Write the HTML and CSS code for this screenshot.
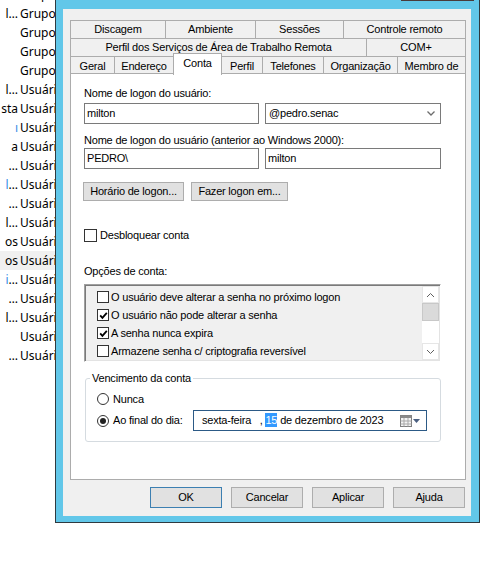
FILE: index.html
```html
<!DOCTYPE html>
<html lang="pt-BR">
<head>
<meta charset="utf-8">
<title>Propriedades</title>
<link rel="stylesheet" href="styles.css">
</head>
<body>
<div class="screen">
  <div class="bg-list">
    <div class="row"><span class="c1"></span><span class="c2">Grupo</span></div>
    <div class="row"><span class="c1">l…</span><span class="c2">Grupo</span></div>
    <div class="row"><span class="c1"></span><span class="c2">Grupo</span></div>
    <div class="row"><span class="c1"></span><span class="c2">Grupo</span></div>
    <div class="row"><span class="c1"></span><span class="c2">Grupo</span></div>
    <div class="row"><span class="c1">l…</span><span class="c2">Usuário</span></div>
    <div class="row"><span class="c1">sta</span><span class="c2">Usuário</span></div>
    <div class="row"><span class="c1 blue">ı</span><span class="c2">Usuário</span></div>
    <div class="row"><span class="c1">a</span><span class="c2">Usuário</span></div>
    <div class="row"><span class="c1">…</span><span class="c2">Usuário</span></div>
    <div class="row"><span class="c1"><span class="blue">l</span>…</span><span class="c2">Usuário</span></div>
    <div class="row"><span class="c1">…</span><span class="c2">Usuário</span></div>
    <div class="row"><span class="c1">l…</span><span class="c2">Usuário</span></div>
    <div class="row"><span class="c1">os</span><span class="c2">Usuário</span></div>
    <div class="row hl"><span class="c1">os</span><span class="c2">Usuário</span></div>
    <div class="row"><span class="c1"><span class="blue">i</span>…</span><span class="c2">Usuário</span></div>
    <div class="row"><span class="c1">…</span><span class="c2">Usuário</span></div>
    <div class="row"><span class="c1">l…</span><span class="c2">Usuário</span></div>
    <div class="row"><span class="c1"></span><span class="c2">Usuário</span></div>
    <div class="row"><span class="c1">…</span><span class="c2">Usuário</span></div>
  </div>

  <div class="window">
    <div class="titlebar"><span class="close-edge"></span></div>
    <div class="dialog">
      <div class="tabs">
        <div class="tabrow r1">
          <div class="tab">Discagem</div>
          <div class="tab">Ambiente</div>
          <div class="tab">Sessões</div>
          <div class="tab">Controle remoto</div>
        </div>
        <div class="tabrow r2">
          <div class="tab">Perfil dos Serviços de Área de Trabalho Remota</div>
          <div class="tab">COM+</div>
        </div>
        <div class="tabrow r3">
          <div class="tab">Geral</div>
          <div class="tab">Endereço</div>
          <div class="tab sel">Conta</div>
          <div class="tab">Perfil</div>
          <div class="tab">Telefones</div>
          <div class="tab">Organização</div>
          <div class="tab">Membro de</div>
        </div>
      </div>

      <div class="panel">
        <div class="label first">Nome de logon do usuário:</div>
        <div class="field-row r-a">
          <div class="input">milton</div>
          <div class="input select"><span>@pedro.senac</span>
            <svg class="chev" width="8" height="5" viewBox="0 0 8 5"><polyline points="0.5,0.5 4,4 7.5,0.5" fill="none" stroke="#6d6d6d" stroke-width="1.3"/></svg>
          </div>
        </div>
        <div class="label second">Nome de logon do usuário (anterior ao Windows 2000):</div>
        <div class="field-row r-b">
          <div class="input">PEDRO\</div>
          <div class="input">milton</div>
        </div>
        <div class="btn-row">
          <div class="btn b-horario">Horário de logon...</div>
          <div class="btn b-fazer">Fazer logon em...</div>
        </div>
        <div class="check-row">
          <span class="cbox"></span><span class="cb-label">Desbloquear conta</span>
        </div>
        <div class="label opts">Opções de conta:</div>
        <div class="listbox">
          <div class="items">
            <div class="item"><span class="cbox small"></span>O usuário deve alterar a senha no próximo logon</div>
            <div class="item"><span class="cbox small checked"><svg width="9" height="9" viewBox="0 0 9 9"><polyline points="1.2,4.4 3.4,6.8 7.8,1.8" fill="none" stroke="#000" stroke-width="1.8"/></svg></span>O usuário não pode alterar a senha</div>
            <div class="item"><span class="cbox small checked"><svg width="9" height="9" viewBox="0 0 9 9"><polyline points="1.2,4.4 3.4,6.8 7.8,1.8" fill="none" stroke="#000" stroke-width="1.8"/></svg></span>A senha nunca expira</div>
            <div class="item"><span class="cbox small"></span>Armazene senha c/ criptografia reversível</div>
          </div>
          <div class="scrollbar">
            <div class="sb-btn"><svg width="9" height="6" viewBox="0 0 9 6"><polyline points="1,5 4.5,1.5 8,5" fill="none" stroke="#606060" stroke-width="1"/></svg></div>
            <div class="sb-thumb"></div>
            <div class="sb-track"></div>
            <div class="sb-btn"><svg width="9" height="6" viewBox="0 0 9 6"><polyline points="1,1 4.5,4.5 8,1" fill="none" stroke="#606060" stroke-width="1"/></svg></div>
          </div>
        </div>
        <fieldset class="group">
          <legend>Vencimento da conta</legend>
          <div class="radio-row">
            <span class="radio"></span><span class="r-label">Nunca</span>
          </div>
          <div class="radio-row second-radio">
            <div class="radio-opt"><span class="radio on"></span><span class="r-label">Ao final do dia:</span></div>
            <div class="datepicker">
              <span class="date-text">sexta-feira &nbsp;&nbsp;, <span class="sel-day">15</span> de dezembro de 2023</span>
              <svg class="cal" width="12" height="12" viewBox="0 0 12 12">
                <rect x="0.5" y="0.5" width="11" height="11" fill="#f4f4f4" stroke="#7f7f7f"/>
                <rect x="0.5" y="0.5" width="11" height="2.5" fill="#8a8a8a"/>
                <line x1="4" y1="3" x2="4" y2="11.5" stroke="#a9a9a9"/>
                <line x1="8" y1="3" x2="8" y2="11.5" stroke="#a9a9a9"/>
                <line x1="0.5" y1="6" x2="11.5" y2="6" stroke="#a9a9a9"/>
                <line x1="0.5" y1="9" x2="11.5" y2="9" stroke="#a9a9a9"/>
              </svg>
              <svg class="dd" width="7" height="4" viewBox="0 0 7 4"><polygon points="0,0 7,0 3.5,4" fill="#4a5f80"/></svg>
            </div>
          </div>
        </fieldset>
      </div>

      <div class="footer">
        <div class="btn fbtn default">OK</div>
        <div class="btn fbtn">Cancelar</div>
        <div class="btn fbtn">Aplicar</div>
        <div class="btn fbtn">Ajuda</div>
      </div>
    </div>
  </div>
</div>
</body>
</html>
```

FILE: styles.css
```css
* { box-sizing: border-box; }

html, body {
  margin: 0;
  padding: 0;
}

body {
  width: 496px;
  height: 569px;
  overflow: hidden;
  background: #ffffff;
  color: #000000;
  font-family: "Liberation Sans", Arial, sans-serif;
  font-size: 11px;
}

.screen {
  display: flex;
  align-items: flex-start;
}

/* background list (explorer behind dialog) */
.bg-list {
  width: 55px;
  flex: 0 0 55px;
  overflow: hidden;
  margin-top: -15px;
  font-family: "Noto Sans", sans-serif;
  font-size: 12px;
  color: #000;
}

.row {
  display: flex;
  height: 19px;
  line-height: 19px;
  white-space: nowrap;
}

.row.hl {
  background: #f0f0f0;
}

.c1 {
  width: 19px;
  flex: 0 0 19px;
  display: flex;
  justify-content: flex-end;
  overflow: hidden;
  padding-right: 1px;
}

.c2 {
  margin-left: 1px;
}

.blue {
  color: #3a8ee6;
}

/* window frame */
.window {
  width: 425px;
  flex: 0 0 425px;
  background: #62c7e9;
  border: 1px solid #2f3a40;
  border-top: none;
  padding: 0 8px 6px 7px;
}

.titlebar {
  height: 9px;
  display: flex;
  justify-content: flex-end;
  align-items: flex-start;
}

.close-edge {
  width: 73px;
  height: 1px;
  background: #4a3b3b;
  margin-right: -3px;
}

.dialog {
  background: #f0f0f0;
  padding: 11px 5px 8px 7px;
  letter-spacing: -0.2px;
}

/* tabs */
.tabs {
  width: 396px;
}

.tabrow {
  display: flex;
  height: 19px;
  margin-bottom: -1px;
}

.tabrow.r3 {
  height: 18px;
  margin-bottom: 0;
}

.tab {
  height: 100%;
  border: 1px solid #acacac;
  margin-right: -1px;
  background: #f0f0f0;
  text-align: center;
  line-height: 17px;
  white-space: nowrap;
  overflow: hidden;
}

.r3 .tab {
  line-height: 18px;
}

.r1 .tab:nth-child(1) { width: 96px; }
.r1 .tab:nth-child(2) { width: 91px; }
.r1 .tab:nth-child(3) { width: 89px; }
.r1 .tab:nth-child(4) { width: 123px; }

.r2 .tab:nth-child(1) { width: 297px; }
.r2 .tab:nth-child(2) { width: 100px; }

.r3 .tab:nth-child(1) { width: 45px; }
.r3 .tab:nth-child(2) { width: 60px; }
.r3 .tab:nth-child(3) { width: 49px; }
.r3 .tab:nth-child(4) { width: 42px; }
.r3 .tab:nth-child(5) { width: 62px; }
.r3 .tab:nth-child(6) { width: 75px; }
.r3 .tab:nth-child(7) { width: 69px; }

.tab.sel {
  position: relative;
  z-index: 2;
  height: 22px;
  margin-top: -3px;
  background: #ffffff;
  border-bottom: none;
  line-height: 19px;
}

/* panel */
.panel {
  width: 396px;
  height: 407px;
  margin-top: -1px;
  background: #ffffff;
  border: 1px solid #acacac;
  padding: 13px 24px 0 13px;
}

.label {
  height: 13px;
  line-height: 13px;
  white-space: nowrap;
}

.label.second { margin-top: 10px; }
.label.opts { margin-top: 23px; }

.field-row {
  display: flex;
  gap: 6px;
}

.field-row.r-a { margin-top: 3px; }
.field-row.r-b { margin-top: 1px; }

.input {
  width: 175px;
  height: 21px;
  border: 1px solid #7a7a7a;
  background: #fff;
  line-height: 19px;
  padding-left: 2px;
  white-space: nowrap;
}

.input + .input {
  width: 176px;
}

.select {
  display: flex;
  justify-content: space-between;
  align-items: center;
  padding-right: 5px;
  padding-left: 3px;
}

.select span {
  line-height: 19px;
}

.chev {
  display: block;
}

.btn {
  height: 19px;
  background: #e1e1e1;
  border: 1px solid #adadad;
  text-align: center;
  line-height: 17px;
  white-space: nowrap;
}

.btn-row {
  display: flex;
  gap: 7px;
  margin-top: 13px;
  margin-left: -1px;
}

.b-horario { width: 101px; }
.b-fazer { width: 97px; }

.check-row {
  display: flex;
  align-items: center;
  height: 13px;
  margin-top: 28px;
}

.cbox {
  width: 13px;
  height: 13px;
  flex: 0 0 13px;
  border: 1px solid #333333;
  background: #ffffff;
  display: flex;
  align-items: center;
  justify-content: center;
}

.cb-label {
  margin-left: 3px;
  line-height: 13px;
}

/* list box */
.listbox {
  display: flex;
  width: 357px;
  height: 78px;
  margin-top: 6px;
  background: #f0f0f0;
  border-style: solid;
  border-width: 1px;
  border-color: #a0a0a0 #ffffff #ffffff #a0a0a0;
  box-shadow: inset 1px 1px 0 #7a7a7a, inset -1px -1px 0 #e3e3e3;
}

.items {
  flex: 1;
  padding: 3px 0 0 12px;
}

.item {
  display: flex;
  align-items: center;
  height: 18px;
  white-space: nowrap;
}

.cbox.small {
  width: 12px;
  height: 12px;
  flex: 0 0 12px;
  margin-right: 2px;
}

.scrollbar {
  width: 17px;
  flex: 0 0 17px;
  margin: 1px 1px 1px 0;
  background: #ffffff;
  display: flex;
  flex-direction: column;
}

.sb-btn {
  height: 17px;
  flex: 0 0 17px;
  border: 1px solid #e6e6e6;
  background: #ffffff;
  display: flex;
  align-items: center;
  justify-content: center;
}

.sb-thumb {
  height: 18px;
  flex: 0 0 18px;
  background: #dadada;
  border: 1px solid #c8c8c8;
}

.sb-track {
  flex: 1;
}

/* group box */
.group {
  margin: 10px 0 0 1px;
  width: 356px;
  padding: 7px 11px 10px 11px;
  border: 1px solid #d5dbe0;
  border-radius: 3px;
  min-width: 0;
}

.group legend {
  padding: 0 2px;
  margin-left: -7px;
  line-height: 13px;
  height: 13px;
}

.radio-row {
  display: flex;
  align-items: center;
  height: 14px;
}

.radio-row.second-radio {
  height: 21px;
  margin-top: 4px;
}

.radio-opt {
  display: flex;
  align-items: center;
  width: 96px;
}

.radio {
  width: 12px;
  height: 12px;
  flex: 0 0 12px;
  border: 1px solid #333333;
  border-radius: 50%;
  background: #ffffff;
  display: flex;
  align-items: center;
  justify-content: center;
}

.radio.on::after {
  content: "";
  width: 6px;
  height: 6px;
  border-radius: 50%;
  background: #222222;
}

.r-label {
  margin-left: 4px;
  line-height: 13px;
}

.datepicker {
  width: 234px;
  height: 21px;
  border: 1px solid #2c5a86;
  background: #ffffff;
  display: flex;
  align-items: center;
  padding-left: 8px;
  padding-right: 6px;
}

.date-text {
  flex: 1;
  white-space: nowrap;
  line-height: 15px;
}

.sel-day {
  background: #3399ff;
  color: #ffffff;
  padding: 1px 0;
}

.cal {
  display: block;
  margin-right: 1px;
}

.dd {
  display: block;
}

/* footer buttons */
.footer {
  display: flex;
  justify-content: flex-end;
  gap: 9px;
  margin-top: 7px;
  padding-right: 1px;
}

.fbtn {
  width: 72px;
  height: 21px;
  line-height: 19px;
}

.fbtn.default {
  border-color: #3c7fb1;
}
```
